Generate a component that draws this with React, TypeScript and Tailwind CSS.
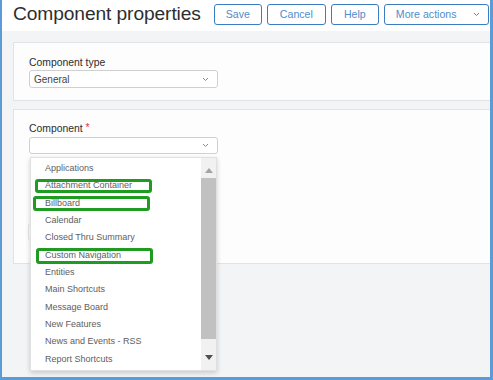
import React from "react";

const items = [
  "Applications",
  "Attachment Container",
  "Billboard",
  "Calendar",
  "Closed Thru Summary",
  "Custom Navigation",
  "Entities",
  "Main Shortcuts",
  "Message Board",
  "New Features",
  "News and Events - RSS",
  "Report Shortcuts",
];

function Chevron({ className = "" }: { className?: string }) {
  return (
    <svg width="7" height="5" viewBox="0 0 7 5" className={className}>
      <polyline points="1,1 3.5,3.5 6,1" fill="none" stroke="#8a8a8a" strokeWidth="1" />
    </svg>
  );
}

function Btn({ w, children }: { w: string; children: React.ReactNode }) {
  return (
    <div
      className={`${w} h-[21px] border-[1.5px] border-[#3d7cc0] rounded-[3px] flex items-center justify-center text-[10.6px] text-[#4f8ccb] bg-white`}
    >
      {children}
    </div>
  );
}

export default function App() {
  return (
    <div
      className="relative w-[493px] h-[380px] overflow-hidden bg-[#f3f4f6] border-l-2 border-r-[3px] border-b-[3px] border-[#5d9bd6] flex flex-col"
      style={{ fontFamily: '"Liberation Sans", Arial, sans-serif' }}
    >
      {/* Header */}
      <div className="h-[31px] bg-white flex items-start shrink-0">
        <div className="ml-[11px] mt-[3px] text-[19.2px] leading-[22px] text-[#2e2e2e] tracking-[-0.1px]">
          Component properties
        </div>
        <div className="ml-[13px] mt-[4px] flex gap-[5px]">
          <Btn w="w-[48px]">Save</Btn>
          <Btn w="w-[59px]">Cancel</Btn>
          <Btn w="w-[48px]">Help</Btn>
          <div className="w-[105px] h-[21px] border-[1.5px] border-[#3d7cc0] rounded-[3px] flex items-center text-[10.6px] text-[#4f8ccb] bg-white pl-[11px]">
            <span>More actions</span>
            <svg width="7" height="5" viewBox="0 0 7 5" className="ml-[16px]">
              <polyline points="1,1 3.5,3.5 6,1" fill="none" stroke="#4f8ccb" strokeWidth="1" />
            </svg>
          </div>
        </div>
      </div>

      {/* Panel 1 */}
      <div className="ml-[11px] mt-[11px] h-[59px] bg-[#fdfdfe] border border-r-0 border-[#e2e3e5] pl-[15px] pt-[14px] shrink-0">
        <div className="text-[10.4px] leading-[12px] text-[#2c2c2c]">Component type</div>
        <div className="mt-[1px] w-[189px] h-[18px] border border-[#d0d0d0] rounded-[3px] bg-white flex items-center justify-between pl-[4px] pr-[8px]">
          <span className="text-[10px] text-[#444]">General</span>
          <Chevron />
        </div>
      </div>

      {/* Panel 2 */}
      <div className="relative z-10 ml-[11px] mt-[8px] h-[155px] bg-[#fdfdfe] border border-r-0 border-[#e2e3e5] pl-[15px] pt-[13px] shrink-0">
        <div className="text-[10.4px] leading-[12px] text-[#2c2c2c]">
          Component <span className="text-[#d9342b] relative -top-[1px]">*</span>
        </div>
        <div className="relative mt-[2px] w-[189px]">
          <div className="w-[189px] h-[17px] border border-[#d0d0d0] rounded-[3px] bg-white flex items-center justify-end pr-[8px]">
            <Chevron />
          </div>

          {/* Dropdown list */}
          <div className="absolute left-[1px] top-[20px] w-[187px] h-[214px] bg-white border border-[#e0e0e0] shadow-[0_2px_5px_rgba(0,0,0,0.18)] flex z-20">
            <div className="flex-1 pl-[14px] pt-[2px]">
              {items.map((it) => (
                <div key={it} className="text-[9px] leading-[17.35px] text-[#5e5e5e] whitespace-nowrap">
                  {it}
                </div>
              ))}
            </div>
            <div className="w-[15px] h-full bg-[#f1f1f1] flex flex-col items-center">
              <div className="h-[20px] flex items-center justify-center pt-[4px]">
                <svg width="8" height="5" viewBox="0 0 8 5">
                  <polygon points="0,5 4,0 8,5" fill="#a3a3a3" />
                </svg>
              </div>
              <div className="w-[15px] h-[161px] bg-[#c1c1c1]" />
              <div className="flex-1 flex items-center justify-center pt-[6px]">
                <svg width="8" height="5" viewBox="0 0 8 5">
                  <polygon points="0,0 8,0 4,5" fill="#505050" />
                </svg>
              </div>
            </div>

            {/* Annotation highlights */}
            <div className="absolute left-[4px] top-[21px] w-[117px] h-[14px] border-[3px] border-[#1f9b22] rounded-[3px]" />
            <div className="absolute left-[2px] top-[38px] w-[117px] h-[15px] border-[3px] border-[#1f9b22] rounded-[3px]" />
            <div className="absolute left-[5px] top-[90px] w-[117px] h-[16px] border-[3px] border-[#1f9b22] rounded-[3px]" />
          </div>
        </div>
        {/* Field hidden behind dropdown */}
        <div className="mt-[69px] -ml-[1px] w-[189px] h-[18px] border border-[#e6e6e6] rounded-[3px] bg-white" />
      </div>
    </div>
  );
}
